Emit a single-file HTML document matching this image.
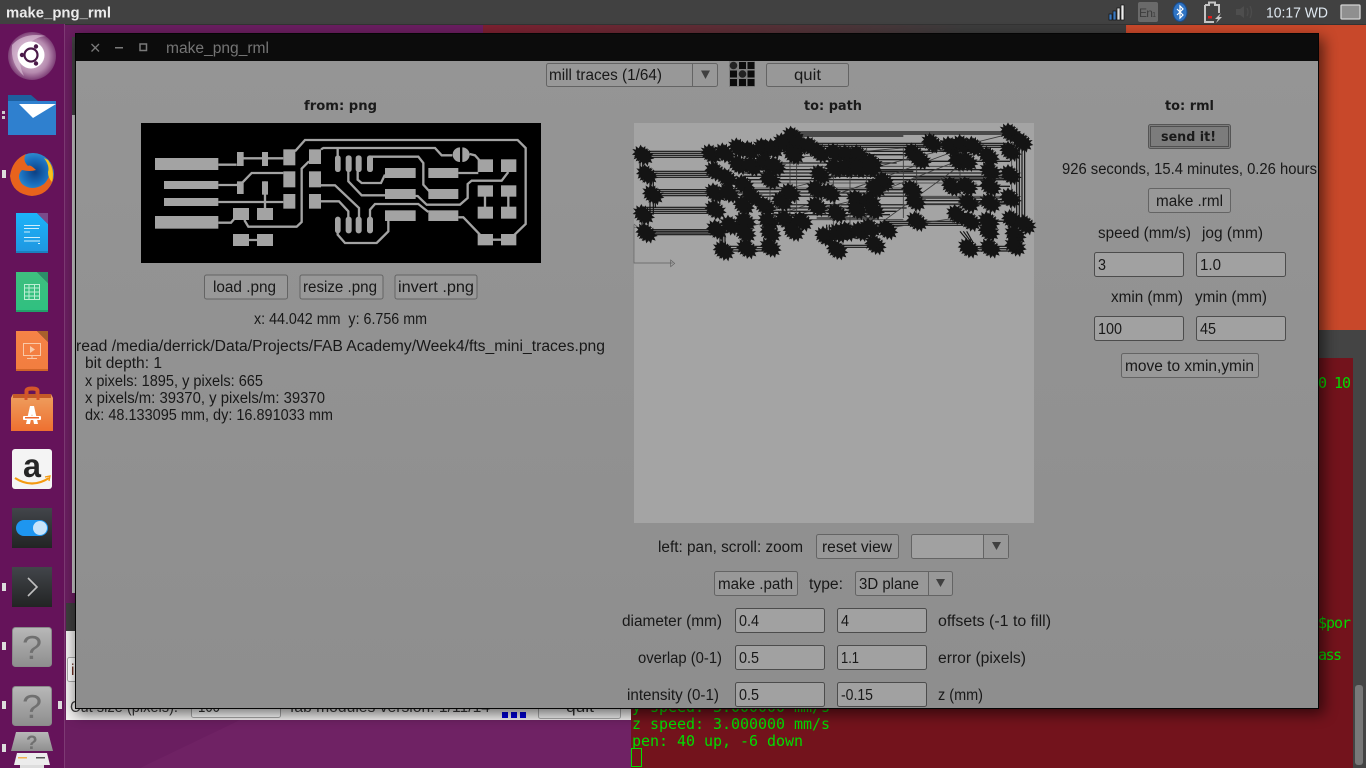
<!DOCTYPE html>
<html><head><meta charset="utf-8"><title>make_png_rml</title>
<style>
html,body{margin:0;padding:0;width:1366px;height:768px;overflow:hidden;background:#661a5c}
svg{display:block}
.t{font-family:"Liberation Sans",sans-serif;font-size:15.5px;fill:#181818}
.b{font-family:"DejaVu Sans",sans-serif;font-size:13px;font-weight:bold;fill:#1a1a1a}
.m{font-family:"DejaVu Sans Mono",monospace;font-size:15px;fill:#00dc00}
.btn{fill:#989898;stroke:#646464;stroke-width:1}
.inp{fill:#a1a1a1;stroke:#4c4c4c;stroke-width:1}
.pcb path.w{fill:none;stroke:#a3a3a3;stroke-width:7}
.pcb rect{fill:#a3a3a3}
</style></head><body>
<svg width="1366" height="768" viewBox="0 0 1366 768" xmlns="http://www.w3.org/2000/svg">
<defs>
<linearGradient id="wall" x1="0" x2="1" y1="0" y2="0"><stop offset="0" stop-color="#6a1e60"/><stop offset=".82" stop-color="#6a1e60"/><stop offset=".825" stop-color="#c8482a"/><stop offset="1" stop-color="#c8482a"/></linearGradient>
<linearGradient id="strip" x1="0" x2="1" y1="0" y2="0"><stop offset="0" stop-color="#7c2030"/><stop offset=".75" stop-color="#3c3c3c"/><stop offset="1" stop-color="#3c3c3c"/></linearGradient>
<linearGradient id="win" x1="0" x2="0" y1="0" y2="1"><stop offset="0" stop-color="#959595"/><stop offset="1" stop-color="#8e8e8e"/></linearGradient>
<linearGradient id="blue" x1="0" x2="0" y1="0" y2="1"><stop offset="0" stop-color="#1cb4fa"/><stop offset="1" stop-color="#1f96e0"/></linearGradient>
<linearGradient id="grn" x1="0" x2="0" y1="0" y2="1"><stop offset="0" stop-color="#3fbf7f"/><stop offset="1" stop-color="#2fc080"/></linearGradient>
<linearGradient id="org" x1="0" x2="0" y1="0" y2="1"><stop offset="0" stop-color="#f58347"/><stop offset="1" stop-color="#f27d3f"/></linearGradient>
<linearGradient id="q" x1="0" x2="0" y1="0" y2="1"><stop offset="0" stop-color="#b8b8b8"/><stop offset="1" stop-color="#8e8e8e"/></linearGradient>
<linearGradient id="dk" x1="0" x2="0" y1="0" y2="1"><stop offset="0" stop-color="#42454a"/><stop offset="1" stop-color="#222424"/></linearGradient>
<linearGradient id="bag" x1="0" x2="0" y1="0" y2="1"><stop offset="0" stop-color="#eea060"/><stop offset="1" stop-color="#ee7030"/></linearGradient>
<radialGradient id="ff" cx=".55" cy=".45" r=".55"><stop offset="0" stop-color="#0c3f82"/><stop offset=".55" stop-color="#1a6fbe"/><stop offset="1" stop-color="#3aa0d8"/></radialGradient>
<radialGradient id="bfb" cx=".5" cy=".5" r=".5"><stop offset="0" stop-color="#e9d8e6"/><stop offset=".7" stop-color="#b58aae"/><stop offset="1" stop-color="#7d3f76"/></radialGradient>
<filter id="sh" x="-5%" y="-5%" width="110%" height="110%"><feGaussianBlur stdDeviation="7"/></filter>
<polygon id="s" points="0,-26 6,-15 14,-22 14,-11 25,-12 17,-4 27,3 16,6 21,17 10,14 7,26 0,16 -7,25 -10,14 -21,18 -16,6 -26,4 -17,-4 -25,-13 -14,-11 -15,-22 -6,-15" fill="#141414"/>
<g id="stars">
<use href="#s" x="38" y="112"/><use href="#s" x="50" y="170"/><use href="#s" x="68" y="230"/><use href="#s" x="40" y="290"/><use href="#s" x="48" y="345"/>
<use href="#s" x="243" y="108"/><use href="#s" x="283" y="105"/><use href="#s" x="325" y="90"/><use href="#s" x="358" y="98"/><use href="#s" x="400" y="90"/><use href="#s" x="428" y="92"/><use href="#s" x="460" y="75"/><use href="#s" x="488" y="55"/>
<use href="#s" x="255" y="160"/><use href="#s" x="290" y="180"/><use href="#s" x="325" y="140"/><use href="#s" x="365" y="145"/><use href="#s" x="405" y="135"/><use href="#s" x="435" y="145"/>
<use href="#s" x="255" y="225"/><use href="#s" x="295" y="225"/><use href="#s" x="340" y="200"/><use href="#s" x="365" y="235"/><use href="#s" x="420" y="185"/>
<use href="#s" x="255" y="275"/><use href="#s" x="340" y="262"/><use href="#s" x="405" y="265"/><use href="#s" x="455" y="250"/><use href="#s" x="480" y="225"/>
<use href="#s" x="260" y="335"/><use href="#s" x="300" y="322"/><use href="#s" x="345" y="310"/><use href="#s" x="345" y="345"/><use href="#s" x="415" y="310"/><use href="#s" x="465" y="305"/><use href="#s" x="515" y="310"/><use href="#s" x="490" y="340"/><use href="#s" x="420" y="345"/>
<use href="#s" x="280" y="398"/><use href="#s" x="350" y="392"/><use href="#s" x="420" y="388"/>
<use href="#s" x="510" y="80"/><use href="#s" x="540" y="85"/><use href="#s" x="490" y="110"/><use href="#s" x="570" y="105"/><use href="#s" x="615" y="105"/><use href="#s" x="650" y="110"/><use href="#s" x="685" y="110"/><use href="#s" x="725" y="135"/>
<use href="#s" x="570" y="170"/><use href="#s" x="615" y="150"/><use href="#s" x="650" y="150"/><use href="#s" x="685" y="150"/><use href="#s" x="720" y="150"/><use href="#s" x="760" y="190"/><use href="#s" x="735" y="210"/>
<use href="#s" x="560" y="215"/><use href="#s" x="600" y="225"/><use href="#s" x="680" y="245"/><use href="#s" x="720" y="250"/><use href="#s" x="560" y="265"/><use href="#s" x="620" y="285"/><use href="#s" x="680" y="275"/><use href="#s" x="730" y="275"/>
<use href="#s" x="585" y="355"/><use href="#s" x="625" y="345"/><use href="#s" x="650" y="340"/><use href="#s" x="690" y="340"/><use href="#s" x="720" y="330"/><use href="#s" x="770" y="335"/><use href="#s" x="620" y="395"/><use href="#s" x="735" y="380"/>
<use href="#s" x="845" y="215"/><use href="#s" x="855" y="250"/><use href="#s" x="860" y="310"/><use href="#s" x="905" y="75"/><use href="#s" x="850" y="105"/><use href="#s" x="870" y="125"/><use href="#s" x="960" y="85"/><use href="#s" x="995" y="80"/><use href="#s" x="1030" y="85"/>
<use href="#s" x="985" y="130"/><use href="#s" x="1010" y="130"/><use href="#s" x="1075" y="115"/><use href="#s" x="1140" y="100"/><use href="#s" x="1140" y="45"/><use href="#s" x="1175" y="72"/>
<use href="#s" x="965" y="205"/><use href="#s" x="1010" y="205"/><use href="#s" x="1080" y="160"/><use href="#s" x="1140" y="170"/><use href="#s" x="1080" y="205"/><use href="#s" x="1140" y="240"/><use href="#s" x="1015" y="255"/><use href="#s" x="1080" y="255"/><use href="#s" x="980" y="290"/><use href="#s" x="1020" y="310"/><use href="#s" x="1075" y="310"/><use href="#s" x="1145" y="305"/><use href="#s" x="1075" y="340"/><use href="#s" x="1185" y="320"/><use href="#s" x="1155" y="350"/><use href="#s" x="1015" y="390"/><use href="#s" x="1080" y="390"/><use href="#s" x="1155" y="385"/>
</g>
</defs>

<!-- wallpaper -->
<rect width="1366" height="768" fill="url(#wall)"/>
<rect x="483" y="24" width="643" height="10" fill="url(#strip)"/>
<path d="M140 768L240 720H640V768Z" fill="#6f2264"/>

<!-- terminal behind -->
<rect x="1318" y="330" width="48" height="438" fill="#444"/>
<rect x="631" y="358" width="722" height="410" fill="#73131c"/>
<rect x="1355" y="685" width="8" height="80" rx="3" fill="#787878"/>
<text class="m" x="1318" y="388" textLength="33">0 10</text>
<text class="m" x="1318" y="628" textLength="33">$por</text>
<text class="m" x="1318" y="660" textLength="24">ass</text>
<text class="m" x="632" y="712" textLength="198">y speed: 3.000000 mm/s</text>
<text class="m" x="632" y="729" textLength="198">z speed: 3.000000 mm/s</text>
<text class="m" x="632" y="746" textLength="171">pen: 40 up, -6 down</text>
<rect x="631.500" y="748.500" width="10" height="18" fill="none" stroke="#00e000"/>

<!-- white window behind -->
<rect x="72" y="37" width="4" height="556" fill="#c8c8c8"/>
<rect x="72" y="37" width="4" height="78" fill="#444"/>
<rect x="66" y="603" width="565" height="28" fill="#3e3e3e"/>
<rect x="66" y="631" width="565" height="89" fill="#f2f1f0"/>
<rect x="67.500" y="657.500" width="20" height="24" rx="2" fill="#fff" stroke="#aaa"/>
<text class="t" x="71" y="675" style="fill:#6a2a1a">i</text>
<text class="t" x="70" y="712" textLength="108" lengthAdjust="spacingAndGlyphs" style="fill:#3c3c3c">Cut size (pixels):</text>
<rect x="191.500" y="695.500" width="89" height="22" rx="2" fill="#fff" stroke="#aaa"/>
<text class="t" x="198" y="712" textLength="22" lengthAdjust="spacingAndGlyphs" style="fill:#333">100</text>
<text class="t" x="290" y="712" textLength="200" lengthAdjust="spacingAndGlyphs" style="fill:#3c3c3c">fab modules version: 1/11/14</text>
<rect x="502" y="712" width="6" height="6" fill="#0000d8"/><rect x="511" y="712" width="6" height="6" fill="#0000d8"/><rect x="520" y="712" width="6" height="6" fill="#0000d8"/>
<rect x="538.500" y="695.500" width="82" height="23" rx="2" fill="#f0f0f0" stroke="#aaa"/>
<text class="t" x="566" y="712" textLength="28" lengthAdjust="spacingAndGlyphs" style="fill:#333">quit</text>

<!-- panel -->
<rect width="1366" height="24" fill="#414141"/>
<rect y="24" width="1366" height="1" fill="#333"/>
<text x="6" y="17.500" textLength="105" lengthAdjust="spacingAndGlyphs" style="font-family:'Liberation Sans',sans-serif;font-size:15px;font-weight:bold;fill:#ebebeb">make_png_rml</text>
<!-- indicators -->
<g>
<rect x="1109" y="14" width="3" height="6" fill="#3a78c0" stroke="#111" stroke-width=".7"/>
<rect x="1113" y="11" width="3" height="9" fill="#3a78c0" stroke="#111" stroke-width=".7"/>
<rect x="1117" y="8" width="3" height="12" fill="#dcdcdc" stroke="#111" stroke-width=".7"/>
<rect x="1121" y="5" width="3" height="15" fill="#eee" stroke="#111" stroke-width=".7"/>
<rect x="1138" y="2" width="20" height="20" rx="2" fill="#6a6a6a"/>
<text x="1139" y="17" textLength="17" style="font-family:'Liberation Sans',sans-serif;font-size:12px;fill:#3c3c3c">En<tspan font-size="7">1</tspan></text>
<ellipse cx="1180" cy="12" rx="7" ry="9.500" fill="#2f74c4" stroke="#1a4a88"/>
<path d="M1177 9l6 6-3 3V6l3 3-6 6" fill="none" stroke="#fff" stroke-width="1.200"/>
<path d="M1205 5h4V2.500h6V5h4v8M1214 22h-9V5" fill="none" stroke="#c4c4c4" stroke-width="2"/>
<rect x="1208" y="16" width="4" height="2.500" fill="#e01a1a"/>
<path d="M1221 13l-6 6h3l-2 4 6-6h-3Z" fill="#c8c8c8"/>
<path d="M1236 9h4l4-3v12l-4-3h-4Z" fill="#4e4e4e"/>
<path d="M1247 8q2 4 0 8M1250 6q3 6 0 12" fill="none" stroke="#4c4c4c" stroke-width="1.300"/>
<text x="1266" y="17.500" textLength="62" lengthAdjust="spacingAndGlyphs" style="font-family:'Liberation Sans',sans-serif;font-size:15px;fill:#dfe8f0">10:17 WD</text>
<rect x="1341" y="5" width="19" height="14" rx="1" fill="#8f8f8f" stroke="#d4d4d4" stroke-width="1.300"/>
</g>

<!-- dock -->
<rect x="0" y="24" width="64" height="744" fill="#65135a"/>
<rect x="64" y="24" width="1" height="744" fill="#7e3a74"/>
<circle cx="32" cy="56" r="24" fill="url(#bfb)"/>
<path d="M12 45Q24 32 46 36Q36 36 24 48Q16 60 24 76Q10 64 12 45Z" fill="#d9bdd4" opacity=".7"/>
<circle cx="31" cy="55" r="13.500" fill="#fff"/>
<circle cx="31" cy="55" r="6.500" fill="none" stroke="#4a1a48" stroke-width="2.200"/>
<circle cx="36" cy="46.500" r="2.200" fill="#4a1a48"/><circle cx="22" cy="55" r="2.200" fill="#4a1a48"/><circle cx="36" cy="63.500" r="2.200" fill="#4a1a48"/>
<!-- mail -->
<path d="M8 95H31L38 101H56V135H8Z" fill="#1d5f9e"/>
<rect x="8" y="101" width="48" height="34" fill="#2f80cf"/>
<path d="M19 104H56L33 118Z" fill="#fff"/>
<!-- firefox -->
<circle cx="33" cy="174" r="21" fill="url(#ff)"/>
<path d="M26 154Q12 160 10 176Q12 194 32 196Q48 195 53 180Q54 168 50 163Q52 176 44 184Q32 192 22 184Q16 176 22 170Q30 172 36 170Q30 164 28 166Q22 160 26 154Z" fill="#e8631c"/>
<path d="M48 160Q55 170 52 182Q48 178 48 172Q50 166 44 158Z" fill="#f7c21c"/>
<!-- writer -->
<path d="M16 213H37L48 224V253H16Z" fill="url(#blue)"/><path d="M37 213L48 224V213Z" fill="#7a4a8a"/>
<rect x="16" y="251" width="32" height="2" fill="#1a80c0"/>
<path d="M24 225.500H40M24 228.500H39M24 232H30M24 237.500H40M24 241H40M38 243.500H40" stroke="#cfeefc" stroke-width="1"/>
<!-- calc -->
<path d="M16 272H37L48 283V312H16Z" fill="url(#grn)"/><path d="M37 272L48 283V272Z" fill="#2c8f68"/>
<rect x="16" y="310" width="32" height="2" fill="#22a06a"/>
<path d="M24.500 284.500H39.500V299.500H24.500ZM24.500 288H39.500M24.500 292H39.500M24.500 296H39.500M29 284.500V299.500M34.500 284.500V299.500" fill="none" stroke="#bdeed4" stroke-width="1"/>
<!-- impress -->
<path d="M16 331H37L48 342V371H16Z" fill="url(#org)"/><path d="M37 331L48 342V331Z" fill="#a8602c"/>
<rect x="16" y="369" width="32" height="2" fill="#d06428"/>
<rect x="23.500" y="343.500" width="17" height="12" fill="none" stroke="#f9c9a8" stroke-width="1"/>
<path d="M30 346L35 349.500L30 353Z" fill="#f9c9a8"/><path d="M32 356V358M27 358.500H37" stroke="#f9c9a8"/>
<!-- software -->
<path d="M27 400V391Q27 389 32 389Q37 389 37 391V400" fill="none" stroke="#d4562a" stroke-width="3"/>
<path d="M13 394H51L53 398V431H11V398Z" fill="url(#bag)"/>
<rect x="13" y="394" width="38" height="4" fill="#c45a28"/>
<path d="M26 400V391Q26 388 32 388Q38 388 38 391V400" fill="none" stroke="#d4562a" stroke-width="3"/>
<path d="M26 424L30 406H34L38 424H34L32 414L30 424Z" fill="#fff"/>
<rect x="23" y="416" width="18" height="4" rx="1" fill="#fff"/><rect x="25" y="417" width="14" height="1.500" fill="#f06a30"/>
<!-- amazon -->
<rect x="12" y="449" width="40" height="40" rx="3" fill="#f4f4f4"/>
<text x="23" y="477" style="font-family:'Liberation Sans',sans-serif;font-size:33px;font-weight:bold;fill:#262626" textLength="18" lengthAdjust="spacingAndGlyphs">a</text>
<path d="M15 478Q32 489 49 478" fill="none" stroke="#f49a10" stroke-width="2.200"/><path d="M45 477L50 476L49 481" fill="none" stroke="#f49a10" stroke-width="1.300"/>
<!-- toggle -->
<rect x="12" y="508" width="40" height="40" fill="url(#dk)"/>
<rect x="16" y="520" width="32" height="16" rx="8" fill="#1e96f0"/><circle cx="40" cy="528" r="7" fill="#c8e4fa"/>
<!-- term -->
<rect x="12" y="567" width="40" height="40" fill="url(#dk)"/>
<path d="M28 578L37 587L28 596" fill="none" stroke="#c0c0c0" stroke-width="1.600"/>
<!-- question -->
<rect x="12.500" y="627.500" width="39" height="39" rx="3" fill="url(#q)" stroke="#8a8a8a"/>
<text x="22" y="659" textLength="20" lengthAdjust="spacingAndGlyphs" style="font-family:'Liberation Sans',sans-serif;font-size:33px;fill:#707070">?</text>
<rect x="12.500" y="686.500" width="39" height="39" rx="3" fill="url(#q)" stroke="#8a8a8a"/>
<text x="22" y="718" textLength="20" lengthAdjust="spacingAndGlyphs" style="font-family:'Liberation Sans',sans-serif;font-size:33px;fill:#707070">?</text>
<!-- disk -->
<path d="M16 732H48L53 751H11Z" fill="url(#q)"/>
<text x="26" y="749" textLength="12" style="font-family:'Liberation Sans',sans-serif;font-size:19px;font-weight:bold;fill:#707070">?</text>
<path d="M17 753H47L50 765H14Z" fill="#ececec"/><rect x="18" y="757" width="9" height="1.500" fill="#f0b050"/><rect x="36" y="757" width="9" height="1.500" fill="#555"/><rect x="20" y="765" width="24" height="3" fill="#ddd"/>
<!-- pips -->
<rect x="2" y="111" width="3" height="3" fill="#ccc"/><rect x="2" y="116" width="3" height="3" fill="#ccc"/>
<rect x="2" y="170" width="4" height="8" fill="#ddd"/><rect x="2" y="583" width="4" height="8" fill="#ddd"/>
<rect x="2" y="642" width="4" height="8" fill="#ddd"/><rect x="2" y="701" width="4" height="8" fill="#ddd"/><rect x="58" y="701" width="4" height="8" fill="#ddd"/><rect x="2" y="744" width="4" height="8" fill="#ddd"/>

<!-- main window -->
<rect x="76" y="38" width="1248" height="676" fill="#000" opacity=".55" filter="url(#sh)"/>
<rect x="75" y="33" width="1244" height="676" fill="#050505"/>
<rect x="76" y="34" width="1242" height="27" fill="#0c0c0c"/>
<rect x="76" y="61" width="1242" height="647" fill="url(#win)"/>
<path d="M91.500 44L99 51.500M99 44L91.500 51.500" stroke="#7a7a7a" stroke-width="1.300"/>
<rect x="115" y="47" width="8" height="1.500" fill="#7a7a7a"/>
<rect x="140" y="44" width="6.500" height="6.500" fill="none" stroke="#7a7a7a" stroke-width="1.500"/>
<text class="t" x="166" y="53" textLength="103" lengthAdjust="spacingAndGlyphs" style="fill:#757575">make_png_rml</text>

<!-- top row -->
<rect class="btn" x="546.500" y="63.500" width="171" height="23" rx="2"/>
<path d="M692.500 63.500V86.500" stroke="#646464"/>
<path d="M701 70.500H710L705.500 79Z" fill="#404040"/>
<text class="t" x="549" y="80" textLength="113" lengthAdjust="spacingAndGlyphs">mill traces (1/64)</text>
<rect x="729" y="61" width="26" height="26" fill="#7e7e7e"/>
<g fill="#0c0c0c">
<circle cx="733.500" cy="65.500" r="3.800" fill="#222"/><rect x="739" y="62" width="7" height="7"/><rect x="747.500" y="62" width="7" height="7"/>
<rect x="730" y="70.500" width="7" height="7"/><circle cx="742.500" cy="74" r="3.800" fill="#222"/><rect x="747.500" y="70.500" width="7" height="7"/>
<rect x="730" y="79" width="7" height="7"/><rect x="739" y="79" width="7" height="7"/><rect x="747.500" y="79" width="7" height="7"/>
</g>
<rect class="btn" x="766.500" y="63.500" width="82" height="23" rx="2"/>
<text class="t" x="794" y="80" textLength="27" lengthAdjust="spacingAndGlyphs">quit</text>

<text class="b" x="304" y="110" textLength="73" lengthAdjust="spacingAndGlyphs">from: png</text>
<text class="b" x="804" y="110" textLength="58" lengthAdjust="spacingAndGlyphs">to: path</text>
<text class="b" x="1165" y="110" textLength="49" lengthAdjust="spacingAndGlyphs">to: rml</text>

<!-- PCB -->
<rect x="141" y="123" width="400" height="140" fill="#000"/>
<g class="pcb" transform="translate(135 118) scale(.33333)">
<path class="w" d="M250 140H305M320 121H445M480 100L510 66H1148L1172 90V318L1120 368M250 201H305L320 196L350 165H445M250 252H445M390 190V272M250 314H288L300 300M328 306L340 326H485L500 312V152L522 130M340 366H370M558 94L565 90H900L920 112H952M1004 108L1020 112L1038 132M1120 162L1100 188H1010L998 198V240L975 260H875L848 234H750M608 90V120M705 125V116H850L865 135V200L885 222M750 170L738 195H680L668 185V150M970 165H1030M640 150V190L680 232H750M558 202H600L672 270V300M558 250H612L640 280V300M705 300V275L720 258H850L880 282M970 298H985L1035 350M1070 365H1100M760 305V340L725 375H630L608 350V335M1050 230V270M1120 230V270"/>
<rect x="60" y="120" width="190" height="36"/><rect x="87" y="189" width="163" height="24"/><rect x="87" y="240" width="163" height="24"/><rect x="60" y="294" width="190" height="38"/>
<rect x="306" y="102" width="20" height="42"/><rect x="381" y="102" width="18" height="42"/><rect x="445" y="94" width="36" height="48"/>
<rect x="306" y="190" width="20" height="38"/><rect x="445" y="160" width="36" height="48"/><rect x="445" y="228" width="36" height="44"/>
<rect x="381" y="190" width="18" height="40"/><rect x="366" y="270" width="48" height="36"/><rect x="294" y="270" width="48" height="36"/>
<rect x="294" y="348" width="48" height="36"/><rect x="366" y="348" width="48" height="36"/>
<rect x="522" y="94" width="36" height="44"/><rect x="522" y="160" width="36" height="48"/><rect x="522" y="228" width="36" height="44"/>
<rect x="600" y="112" width="17" height="50" rx="8"/><rect x="632" y="112" width="18" height="50" rx="8"/><rect x="662" y="112" width="18" height="50" rx="8"/><rect x="696" y="112" width="18" height="50" rx="8"/>
<rect x="600" y="296" width="17" height="50" rx="8"/><rect x="632" y="296" width="18" height="50" rx="8"/><rect x="662" y="296" width="18" height="50" rx="8"/><rect x="696" y="296" width="18" height="50" rx="8"/>
<rect x="750" y="150" width="92" height="30"/><rect x="750" y="213" width="92" height="30"/><rect x="750" y="277" width="92" height="32"/>
<rect x="880" y="150" width="90" height="30"/><rect x="880" y="213" width="90" height="30"/><rect x="880" y="277" width="90" height="32"/>
<path d="M975 88A22 22 0 0 0 975 132ZM982 88A22 22 0 0 1 982 132Z" fill="#a3a3a3"/>
<rect x="1028" y="124" width="46" height="38"/><rect x="1098" y="124" width="46" height="38"/>
<rect x="1028" y="202" width="46" height="34"/><rect x="1098" y="202" width="46" height="34"/><rect x="1028" y="266" width="46" height="36"/><rect x="1098" y="266" width="46" height="36"/>
<rect x="1028" y="348" width="46" height="34"/><rect x="1098" y="348" width="46" height="34"/>
</g>

<!-- buttons left -->
<rect class="btn" x="204.500" y="275" width="83" height="24" rx="2"/><text class="t" x="213" y="292" textLength="63" lengthAdjust="spacingAndGlyphs">load .png</text>
<rect class="btn" x="300" y="275" width="83" height="24" rx="2"/><text class="t" x="303" y="292" textLength="74" lengthAdjust="spacingAndGlyphs">resize .png</text>
<rect class="btn" x="395" y="275" width="82" height="24" rx="2"/><text class="t" x="398" y="292" textLength="76" lengthAdjust="spacingAndGlyphs">invert .png</text>
<text class="t" x="254" y="324" textLength="173" lengthAdjust="spacingAndGlyphs" xml:space="preserve">x: 44.042 mm  y: 6.756 mm</text>
<text class="t" x="76" y="351" textLength="529" lengthAdjust="spacingAndGlyphs">read /media/derrick/Data/Projects/FAB Academy/Week4/fts_mini_traces.png</text>
<text class="t" x="85" y="368" textLength="77" lengthAdjust="spacingAndGlyphs">bit depth: 1</text>
<text class="t" x="85" y="386" textLength="178" lengthAdjust="spacingAndGlyphs">x pixels: 1895, y pixels: 665</text>
<text class="t" x="85" y="403" textLength="240" lengthAdjust="spacingAndGlyphs">x pixels/m: 39370, y pixels/m: 39370</text>
<text class="t" x="85" y="420" textLength="248" lengthAdjust="spacingAndGlyphs">dx: 48.133095 mm, dy: 16.891033 mm</text>

<!-- path view -->
<rect x="634" y="123" width="400" height="400" fill="#a4a4a4"/>
<g transform="translate(630 118) scale(.33333)">
<path fill="none" stroke="#141414" stroke-width="3.500" d="M40 100H240M40 106H240M40 112H240M40 118H240M50 160H240M50 166H240M50 172H240M50 178H240M68 215H240M68 221H240M68 227H240M68 233H240M40 268H240M40 274H240M40 280H240M40 286H240M48 335H250M48 340H250M48 345H250M48 350H250M495 42H1135M495 48H1135M500 54H820M540 76H1130M540 82H1130M550 88H1130M280 385H420M280 392H420M280 399H420M620 382H735M620 388H735M1020 385H1155M1020 392H1155M1020 399H1155M1160 90V320M1168 85V320M1176 80V320M1184 78V320M270 350V395M278 350V395M285 350V395M415 345V390M425 345V390M590 320V360M598 320V360M760 310H1070M760 316H1070M775 322H1000M1010 340L1030 375M1000 340L1022 370M990 340L1015 370M30 120V160M38 120V165M44 295V340M36 295V340M60 185V290M70 185V290M76 235V270"/>
<path fill="none" stroke="#1e1e1e" stroke-width="4" d="M310 125H440M310 155H1150M340 175H1150M290 225H830M850 248H1160M420 270H830M420 290H780M850 180H1150M560 125H860M560 160H850M560 300H740M1000 205H1140M1000 255H1150M980 310H1145M310 135H800M340 165H1140M330 185H1150M300 215H840M300 235H840M420 260H820M420 280H800M850 240H1150M850 258H1150M560 110H860M560 100H1030M880 130H1140"/>
<path fill="none" stroke="#3a3a3a" stroke-width="2.500" d="M300 145H1020M330 195H1040M300 210H840M290 235H1150M330 260H1080M350 305H820M300 340L700 240L1030 110M480 210L1130 50M620 230L1000 90M690 360L980 150M770 330L980 300L1140 310M500 70V340M480 100V330M420 180V340M820 90V300M860 120V320M990 100V300M1080 120V330M1145 100V300M610 90V350M660 90V345M710 90V350M420 300L700 200M480 120L1040 70"/>
<path fill="none" stroke="#606060" stroke-width="2" d="M12 320V435H128M12 318L24 328H12M122 426V446L134 436Z"/>
<use href="#stars"/>
<use href="#stars" transform="translate(8 6)"/>
<use href="#stars" transform="translate(-6 -6)"/>
</g>

<!-- center controls -->
<text class="t" x="658" y="552" textLength="145" lengthAdjust="spacingAndGlyphs">left: pan, scroll: zoom</text>
<rect class="btn" x="816.500" y="534.500" width="82" height="24" rx="2"/><text class="t" x="822" y="552" textLength="70" lengthAdjust="spacingAndGlyphs">reset view</text>
<rect class="inp" x="911.500" y="534.500" width="97" height="24" rx="2" style="stroke:#646464"/>
<rect x="984" y="535" width="24" height="23" fill="#989898"/>
<path d="M983.500 534.500V558.500" stroke="#646464"/><path d="M992 542H1001L996.500 550Z" fill="#404040"/>
<rect class="btn" x="714.500" y="571.500" width="83" height="24" rx="2"/><text class="t" x="718" y="589" textLength="75" lengthAdjust="spacingAndGlyphs">make .path</text>
<text class="t" x="809" y="589" textLength="34" lengthAdjust="spacingAndGlyphs">type:</text>
<rect class="btn" x="855.500" y="571.500" width="97" height="24" rx="2"/>
<path d="M928.500 571.500V595.500" stroke="#646464"/><path d="M936 579H945L940.500 587Z" fill="#404040"/>
<text class="t" x="859" y="589" textLength="60" lengthAdjust="spacingAndGlyphs">3D plane</text>

<text class="t" x="622" y="626" textLength="100" lengthAdjust="spacingAndGlyphs">diameter (mm)</text>
<rect class="inp" x="735.500" y="608.500" width="89" height="24" rx="2"/><text class="t" x="739" y="626" textLength="20" lengthAdjust="spacingAndGlyphs">0.4</text>
<rect class="inp" x="837.500" y="608.500" width="89" height="24" rx="2"/><text class="t" x="841" y="626" textLength="8" lengthAdjust="spacingAndGlyphs">4</text>
<text class="t" x="938" y="626" textLength="113" lengthAdjust="spacingAndGlyphs">offsets (-1 to fill)</text>

<text class="t" x="638" y="663" textLength="84" lengthAdjust="spacingAndGlyphs">overlap (0-1)</text>
<rect class="inp" x="735.500" y="645.500" width="89" height="24" rx="2"/><text class="t" x="739" y="663" textLength="20" lengthAdjust="spacingAndGlyphs">0.5</text>
<rect class="inp" x="837.500" y="645.500" width="89" height="24" rx="2"/><text class="t" x="841" y="663" textLength="18" lengthAdjust="spacingAndGlyphs">1.1</text>
<text class="t" x="938" y="663" textLength="88" lengthAdjust="spacingAndGlyphs">error (pixels)</text>

<text class="t" x="627" y="700" textLength="92" lengthAdjust="spacingAndGlyphs">intensity (0-1)</text>
<rect class="inp" x="735.500" y="682.500" width="89" height="24" rx="2"/><text class="t" x="739" y="700" textLength="20" lengthAdjust="spacingAndGlyphs">0.5</text>
<rect class="inp" x="837.500" y="682.500" width="89" height="24" rx="2"/><text class="t" x="841" y="700" textLength="32" lengthAdjust="spacingAndGlyphs">-0.15</text>
<text class="t" x="938" y="700" textLength="45" lengthAdjust="spacingAndGlyphs">z (mm)</text>

<!-- right column -->
<rect x="1148.500" y="124.500" width="82" height="24" rx="2" fill="#7c7c7c" stroke="#555"/>
<rect x="1150.500" y="126.500" width="78" height="20" fill="none" stroke="#222" stroke-width="1" stroke-dasharray="1 1"/>
<text class="b" x="1161" y="141" textLength="55" lengthAdjust="spacingAndGlyphs">send it!</text>
<text class="t" x="1062" y="174" textLength="255" lengthAdjust="spacingAndGlyphs">926 seconds, 15.4 minutes, 0.26 hours</text>
<rect class="btn" x="1148.500" y="188.500" width="82" height="24" rx="2"/><text class="t" x="1156" y="206" textLength="67" lengthAdjust="spacingAndGlyphs">make .rml</text>
<text class="t" x="1098" y="238" textLength="93" lengthAdjust="spacingAndGlyphs">speed (mm/s)</text>
<text class="t" x="1202" y="238" textLength="61" lengthAdjust="spacingAndGlyphs">jog (mm)</text>
<rect class="inp" x="1094.500" y="252.500" width="89" height="24" rx="2"/><text class="t" x="1098" y="270" textLength="8" lengthAdjust="spacingAndGlyphs">3</text>
<rect class="inp" x="1196.500" y="252.500" width="89" height="24" rx="2"/><text class="t" x="1200" y="270" textLength="21" lengthAdjust="spacingAndGlyphs">1.0</text>
<text class="t" x="1111" y="302" textLength="72" lengthAdjust="spacingAndGlyphs">xmin (mm)</text>
<text class="t" x="1195" y="302" textLength="72" lengthAdjust="spacingAndGlyphs">ymin (mm)</text>
<rect class="inp" x="1094.500" y="316.500" width="89" height="24" rx="2"/><text class="t" x="1098" y="334" textLength="24" lengthAdjust="spacingAndGlyphs">100</text>
<rect class="inp" x="1196.500" y="316.500" width="89" height="24" rx="2"/><text class="t" x="1200" y="334" textLength="16" lengthAdjust="spacingAndGlyphs">45</text>
<rect class="btn" x="1121.500" y="353.500" width="137" height="24" rx="2"/><text class="t" x="1125" y="371" textLength="129" lengthAdjust="spacingAndGlyphs">move to xmin,ymin</text>
</svg>
</body></html>
